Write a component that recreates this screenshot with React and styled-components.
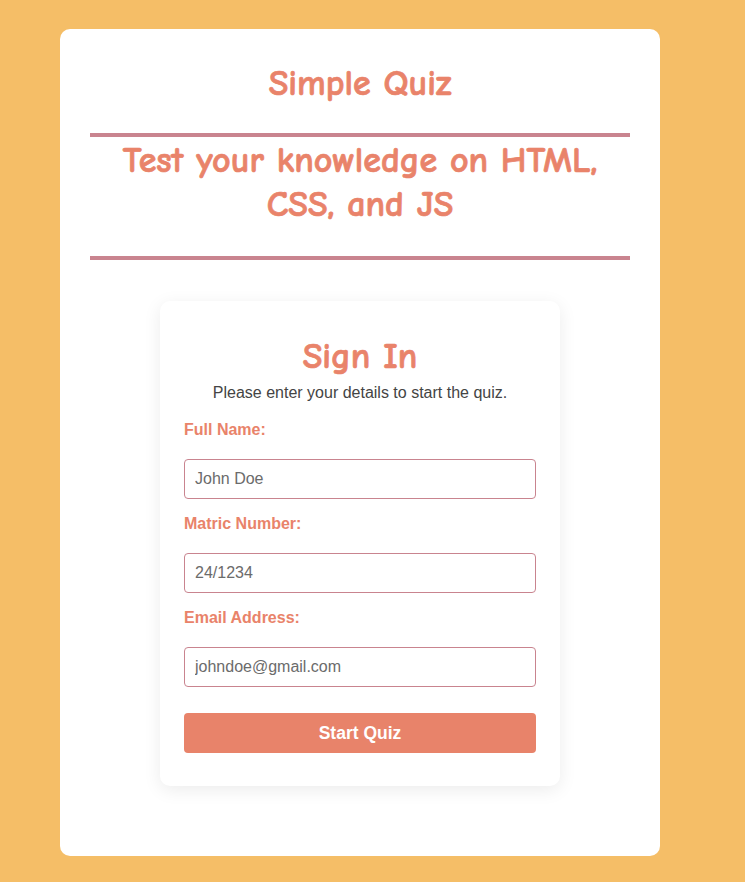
import React from "react";
import styled, { createGlobalStyle } from "styled-components";

const GlobalStyle = createGlobalStyle`
  html, body {
    margin: 0;
    padding: 0;
    background: #f5be67;
  }
  body {
    font-family: "Liberation Sans", Arial, sans-serif;
  }
  * { box-sizing: border-box; }
`;

const comic = `"Comic Sans MS", "Comic Neue", "Noto Sans", sans-serif`;

const Page = styled.div`
  padding: 29px 0 26px 60px;
  min-height: 882px;
`;

const Card = styled.main`
  width: 600px;
  height: 827px;
  background: #ffffff;
  border-radius: 10px;
  padding: 33px 30px 0;
`;

const Title = styled.h1`
  margin: 0;
  font-family: ${comic};
  font-weight: 700;
  font-size: 36px;
  line-height: 44px;
  color: #e9836a;
  text-align: center;
  -webkit-text-stroke: 0.7px #e9836a;
`;

const Rule = styled.hr`
  margin: ${(p) => p.$mt}px 0 0;
  border: none;
  height: 4px;
  background: #c9848f;
`;

const Subtitle = styled.h2`
  margin: 2px 0 0;
  padding: 0 10px;
  font-family: ${comic};
  font-weight: 700;
  font-size: 36px;
  line-height: 44px;
  color: #e9836a;
  text-align: center;
  -webkit-text-stroke: 0.7px #e9836a;
`;

const SignInCard = styled.section`
  width: 400px;
  margin: 41px auto 0;
  background: #ffffff;
  border-radius: 10px;
  box-shadow: 0 4px 18px rgba(0, 0, 0, 0.08);
  padding: 34px 24px 33px;
`;

const SignInTitle = styled.h2`
  margin: 0;
  font-family: ${comic};
  font-weight: 700;
  font-size: 36px;
  line-height: 44px;
  color: #e9836a;
  text-align: center;
  -webkit-text-stroke: 0.7px #e9836a;
`;

const Intro = styled.p`
  margin: 5px 0 0;
  font-size: 16px;
  line-height: 18px;
  color: #444;
  text-align: center;
`;

const Form = styled.form`
  display: flex;
  flex-direction: column;
  margin-top: 18px;
`;

const Label = styled.label`
  display: block;
  font-size: 16px;
  font-weight: 700;
  line-height: 19px;
  color: #e9836a;
  margin-bottom: 20px;
`;

const Input = styled.input`
  display: block;
  width: 100%;
  height: 40px;
  padding: 0 10px;
  border: 1px solid #c9848f;
  border-radius: 4px;
  font-family: "Liberation Sans", Arial, sans-serif;
  font-size: 16px;
  color: #333;
  margin-bottom: 15px;
  outline: none;
  &::placeholder {
    color: #6b6b6b;
  }
`;

const Button = styled.button`
  margin-top: 11px;
  height: 40px;
  width: 100%;
  border: none;
  border-radius: 4px;
  background: #e8836a;
  color: #ffffff;
  font-family: "Liberation Sans", Arial, sans-serif;
  font-size: 17.5px;
  font-weight: 700;
  cursor: pointer;
`;

const fields = [
  { id: "name", label: "Full Name:", placeholder: "John Doe", type: "text" },
  { id: "matric", label: "Matric Number:", placeholder: "24/1234", type: "text" },
  { id: "email", label: "Email Address:", placeholder: "johndoe@gmail.com", type: "email" },
];

export default function App() {
  return (
    <>
      <GlobalStyle />
      <Page>
        <Card>
          <Title>Simple Quiz</Title>
          <Rule $mt={27} />
          <Subtitle>Test your knowledge on HTML, CSS, and JS</Subtitle>
          <Rule $mt={29} />
          <SignInCard>
            <SignInTitle>Sign In</SignInTitle>
            <Intro>Please enter your details to start the quiz.</Intro>
            <Form onSubmit={(e) => e.preventDefault()}>
              {fields.map((f) => (
                <React.Fragment key={f.id}>
                  <Label htmlFor={f.id}>{f.label}</Label>
                  <Input id={f.id} type={f.type} placeholder={f.placeholder} />
                </React.Fragment>
              ))}
              <Button type="submit">Start Quiz</Button>
            </Form>
          </SignInCard>
        </Card>
      </Page>
    </>
  );
}
